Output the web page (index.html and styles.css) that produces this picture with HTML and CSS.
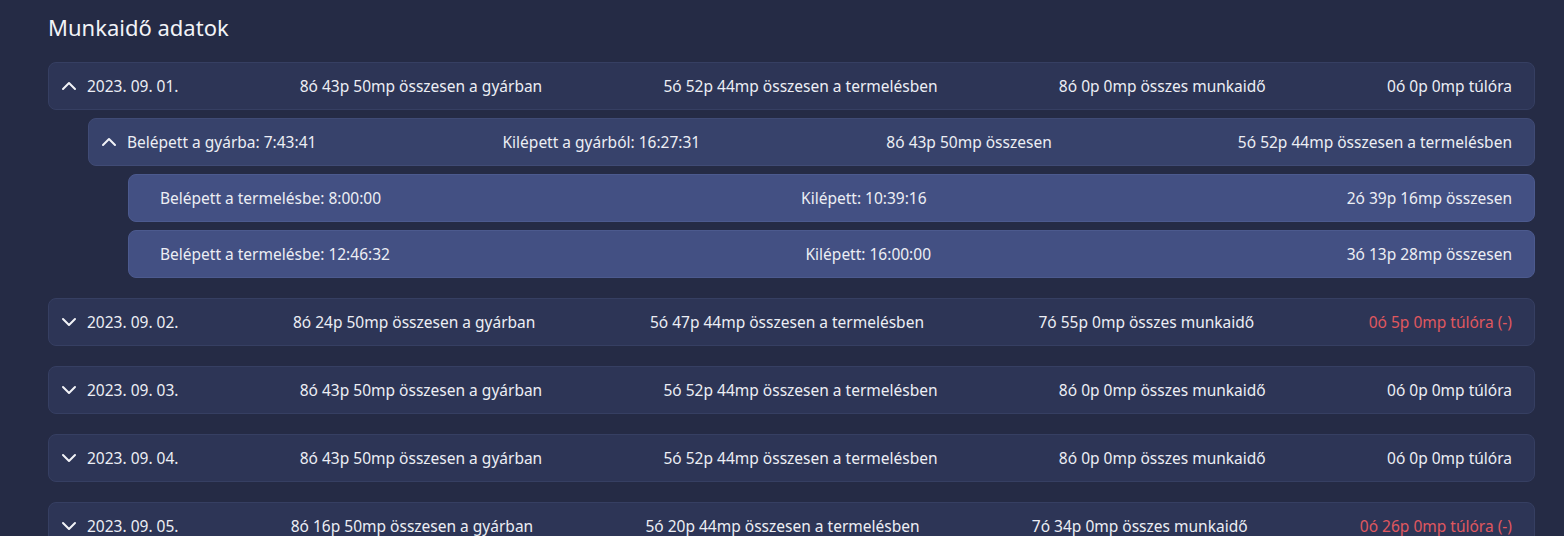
FILE: index.html
```html
<!DOCTYPE html>
<html lang="hu">
<head>
<meta charset="utf-8">
<title>Munkaidő adatok</title>
<link rel="stylesheet" href="styles.css">
</head>
<body>
<main class="page">
  <h1 class="title">Munkaidő adatok</h1>
  <div class="days">
    <section class="day">
      <div class="row lvl1">
        <span class="lead"><svg class="chev" viewBox="0 0 16 16"><path d="M2 11 L8 5 L14 11"/></svg>2023. 09. 01.</span>
        <span>8ó 43p 50mp összesen a gyárban</span>
        <span>5ó 52p 44mp összesen a termelésben</span>
        <span>8ó 0p 0mp összes munkaidő</span>
        <span>0ó 0p 0mp túlóra</span>
      </div>
      <div class="children">
        <div class="group">
          <div class="row lvl2">
            <span class="lead"><svg class="chev" viewBox="0 0 16 16"><path d="M2 11 L8 5 L14 11"/></svg>Belépett a gyárba: 7:43:41</span>
            <span>Kilépett a gyárból: 16:27:31</span>
            <span>8ó 43p 50mp összesen</span>
            <span>5ó 52p 44mp összesen a termelésben</span>
          </div>
          <div class="children">
            <div class="row lvl3">
              <span>Belépett a termelésbe: 8:00:00</span>
              <span>Kilépett: 10:39:16</span>
              <span>2ó 39p 16mp összesen</span>
            </div>
            <div class="row lvl3">
              <span>Belépett a termelésbe: 12:46:32</span>
              <span>Kilépett: 16:00:00</span>
              <span>3ó 13p 28mp összesen</span>
            </div>
          </div>
        </div>
      </div>
    </section>
    <section class="day">
      <div class="row lvl1">
        <span class="lead"><svg class="chev" viewBox="0 0 16 16"><path d="M2 5 L8 11 L14 5"/></svg>2023. 09. 02.</span>
        <span>8ó 24p 50mp összesen a gyárban</span>
        <span>5ó 47p 44mp összesen a termelésben</span>
        <span>7ó 55p 0mp összes munkaidő</span>
        <span class="neg">0ó 5p 0mp túlóra (-)</span>
      </div>
    </section>
    <section class="day">
      <div class="row lvl1">
        <span class="lead"><svg class="chev" viewBox="0 0 16 16"><path d="M2 5 L8 11 L14 5"/></svg>2023. 09. 03.</span>
        <span>8ó 43p 50mp összesen a gyárban</span>
        <span>5ó 52p 44mp összesen a termelésben</span>
        <span>8ó 0p 0mp összes munkaidő</span>
        <span>0ó 0p 0mp túlóra</span>
      </div>
    </section>
    <section class="day">
      <div class="row lvl1">
        <span class="lead"><svg class="chev" viewBox="0 0 16 16"><path d="M2 5 L8 11 L14 5"/></svg>2023. 09. 04.</span>
        <span>8ó 43p 50mp összesen a gyárban</span>
        <span>5ó 52p 44mp összesen a termelésben</span>
        <span>8ó 0p 0mp összes munkaidő</span>
        <span>0ó 0p 0mp túlóra</span>
      </div>
    </section>
    <section class="day">
      <div class="row lvl1">
        <span class="lead"><svg class="chev" viewBox="0 0 16 16"><path d="M2 5 L8 11 L14 5"/></svg>2023. 09. 05.</span>
        <span>8ó 16p 50mp összesen a gyárban</span>
        <span>5ó 20p 44mp összesen a termelésben</span>
        <span>7ó 34p 0mp összes munkaidő</span>
        <span class="neg">0ó 26p 0mp túlóra (-)</span>
      </div>
    </section>
  </div>
</main>
</body>
</html>
```

FILE: styles.css
```css
html, body {
  margin: 0;
  padding: 0;
  background: #252b45;
  color: #eceef4;
  font-family: "Noto Sans", "Open Sans", sans-serif;
  overflow: hidden;
}

.page {
  padding: 8px 29px 0 48px;
}

.title {
  margin: 0 0 16px 0;
  font-size: 22px;
  font-weight: 400;
  line-height: 38px;
  color: #f2f3f7;
}

.days {
  display: flex;
  flex-direction: column;
  gap: 20px;
}

.day, .group {
  display: flex;
  flex-direction: column;
}

.children {
  display: flex;
  flex-direction: column;
  gap: 8px;
  margin-top: 8px;
  margin-left: 40px;
}

.row {
  height: 48px;
  box-sizing: border-box;
  display: flex;
  align-items: center;
  justify-content: space-between;
  padding: 0 22px 0 12px;
  border-radius: 8px;
  font-size: 15.5px;
  white-space: nowrap;
}

.lvl1 {
  background: #2d3556;
  border: 1px solid #363f62;
}

.lvl2 {
  background: #37426b;
  border: 1px solid #404b75;
}

.lvl3 {
  background: #435083;
  border: 1px solid #4c5a8e;
  padding-left: 31px;
}

.lead {
  display: flex;
  align-items: center;
  gap: 10px;
}

.chev {
  width: 16px;
  height: 16px;
  fill: none;
  stroke: #f2f3f7;
  stroke-width: 2;
  stroke-linecap: round;
  stroke-linejoin: round;
}

.neg {
  color: #e0585f;
}
```
